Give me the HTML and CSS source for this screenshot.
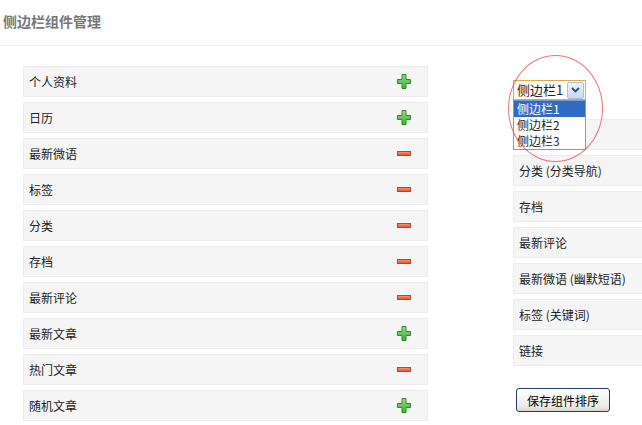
FILE: index.html
```html
<!DOCTYPE html>
<html lang="zh-CN">
<head>
  <meta charset="UTF-8"/>
  <title>侧边栏组件管理</title>
  <link rel="stylesheet" href="styles.css">
</head>
<body>
  <h2 class="page-title">侧边栏组件管理</h2>
  <div class="layout">
    <div class="widgets">
      <div class="widget"><span>个人资料</span><svg class="ico" width="14" height="15" viewBox="0 0 14 15"><use href="#plus"/></svg></div>
      <div class="widget"><span>日历</span><svg class="ico" width="14" height="15" viewBox="0 0 14 15"><use href="#plus"/></svg></div>
      <div class="widget"><span>最新微语</span><svg class="ico" width="14" height="15" viewBox="0 0 14 15"><use href="#minus"/></svg></div>
      <div class="widget"><span>标签</span><svg class="ico" width="14" height="15" viewBox="0 0 14 15"><use href="#minus"/></svg></div>
      <div class="widget"><span>分类</span><svg class="ico" width="14" height="15" viewBox="0 0 14 15"><use href="#minus"/></svg></div>
      <div class="widget"><span>存档</span><svg class="ico" width="14" height="15" viewBox="0 0 14 15"><use href="#minus"/></svg></div>
      <div class="widget"><span>最新评论</span><svg class="ico" width="14" height="15" viewBox="0 0 14 15"><use href="#minus"/></svg></div>
      <div class="widget"><span>最新文章</span><svg class="ico" width="14" height="15" viewBox="0 0 14 15"><use href="#plus"/></svg></div>
      <div class="widget"><span>热门文章</span><svg class="ico" width="14" height="15" viewBox="0 0 14 15"><use href="#minus"/></svg></div>
      <div class="widget"><span>随机文章</span><svg class="ico" width="14" height="15" viewBox="0 0 14 15"><use href="#plus"/></svg></div>
    </div>

    <div class="sidebar">
      <div class="picker">
        <div class="select"><span>侧边栏1</span><i class="arrow"><svg width="9" height="6" viewBox="0 0 9 6"><path d="M1 1 L4.5 4.5 L8 1" fill="none" stroke="#2d4a80" stroke-width="1.8"/></svg></i></div>
        <ul class="options">
          <li class="on">侧边栏1</li>
          <li>侧边栏2</li>
          <li>侧边栏3</li>
        </ul>
        <div class="mark"></div>
      </div>
      <div class="slots">
        <div class="slot"></div>
        <div class="slot">分类 (分类导航)</div>
        <div class="slot">存档</div>
        <div class="slot">最新评论</div>
        <div class="slot">最新微语 (幽默短语)</div>
        <div class="slot">标签 (关键词)</div>
        <div class="slot">链接</div>
      </div>
      <button class="save">保存组件排序</button>
    </div>
  </div>

  <svg width="0" height="0" style="position:absolute">
    <defs>
      <linearGradient id="gp" x1="0" y1="0" x2="0" y2="1">
        <stop offset="0" stop-color="#8fdc84"/><stop offset="1" stop-color="#3fae3a"/>
      </linearGradient>
      <linearGradient id="gm" x1="0" y1="0" x2="0" y2="1">
        <stop offset="0" stop-color="#ff9a7c"/><stop offset="1" stop-color="#e9482c"/>
      </linearGradient>
      <symbol id="plus" viewBox="0 0 14 15">
        <path d="M5 0.5 H9 V5.5 H13.5 V9.5 H9 V14.5 H5 V9.5 H0.5 V5.5 H5 Z" fill="url(#gp)" stroke="#2f8a2a" stroke-width="1"/>
      </symbol>
      <symbol id="minus" viewBox="0 0 14 15">
        <rect x="0.5" y="5.5" width="13" height="4" fill="url(#gm)" stroke="#d8391e" stroke-width="1"/>
      </symbol>
    </defs>
  </svg>
</body>
</html>
```

FILE: styles.css
```css
body {margin:0;font-family:"Noto Sans CJK SC","Noto Sans",sans-serif;font-size:12px;color:#222;background:#fff;overflow:hidden}
.page-title {margin:0;padding:11px 3px 0;height:34px;font-size:14px;font-weight:bold;color:#777;
             line-height:20px;border-bottom:1px solid #ececec}
.layout {display:flex;align-items:flex-start;padding-top:20px}
.widgets {margin-left:23px;width:405px;flex-shrink:0;display:flex;flex-direction:column;gap:5px}
.widget {height:29px;display:flex;align-items:center;justify-content:space-between;
         padding:0 16px 0 5px;background:#f5f5f5;border:1px solid #ececec}
.ico {display:block}
.sidebar {margin-left:85px;width:160px;flex-shrink:0}
.picker {position:relative;height:39px;padding-top:14px}
.select {width:71px;height:18px;border:1px solid #e0a846;background:#fff;display:flex;font-size:13px;
         align-items:center;justify-content:space-between}
.select span {padding-left:3px;line-height:18px}
.arrow {width:15px;height:15px;margin-right:1px;border:1px solid #a9bfe0;border-radius:2px;
        background:linear-gradient(#eef4fd,#c6d8f4);display:flex;align-items:center;justify-content:center}
.arrow svg {display:block}
.options {position:absolute;left:0;top:34px;z-index:2;width:71px;margin:0;padding:0;list-style:none;
          border:1px solid #7f9db9;background:#fff;font-size:12px}
.options li {height:16px;line-height:16px;padding-left:3px}
.options li.on {background:#316ac5;color:#fff}
.mark {position:absolute;left:-5px;top:-11px;width:93px;height:105px;border:1px solid rgba(232,70,70,0.75);
       border-radius:50%;z-index:3;pointer-events:none}
.slots {display:flex;flex-direction:column;gap:5px}
.slot {height:29px;line-height:29px;padding-left:5px;background:#f5f5f5;border:1px solid #ececec}
.save {margin:22px 0 0 3px;width:94px;height:24px;padding:0;font:inherit;font-size:12px;color:#000;
       border:1px solid #1f3d6e;border-radius:3px;background:linear-gradient(#ffffff,#ecebe6 80%,#d8d5cc)}
```
